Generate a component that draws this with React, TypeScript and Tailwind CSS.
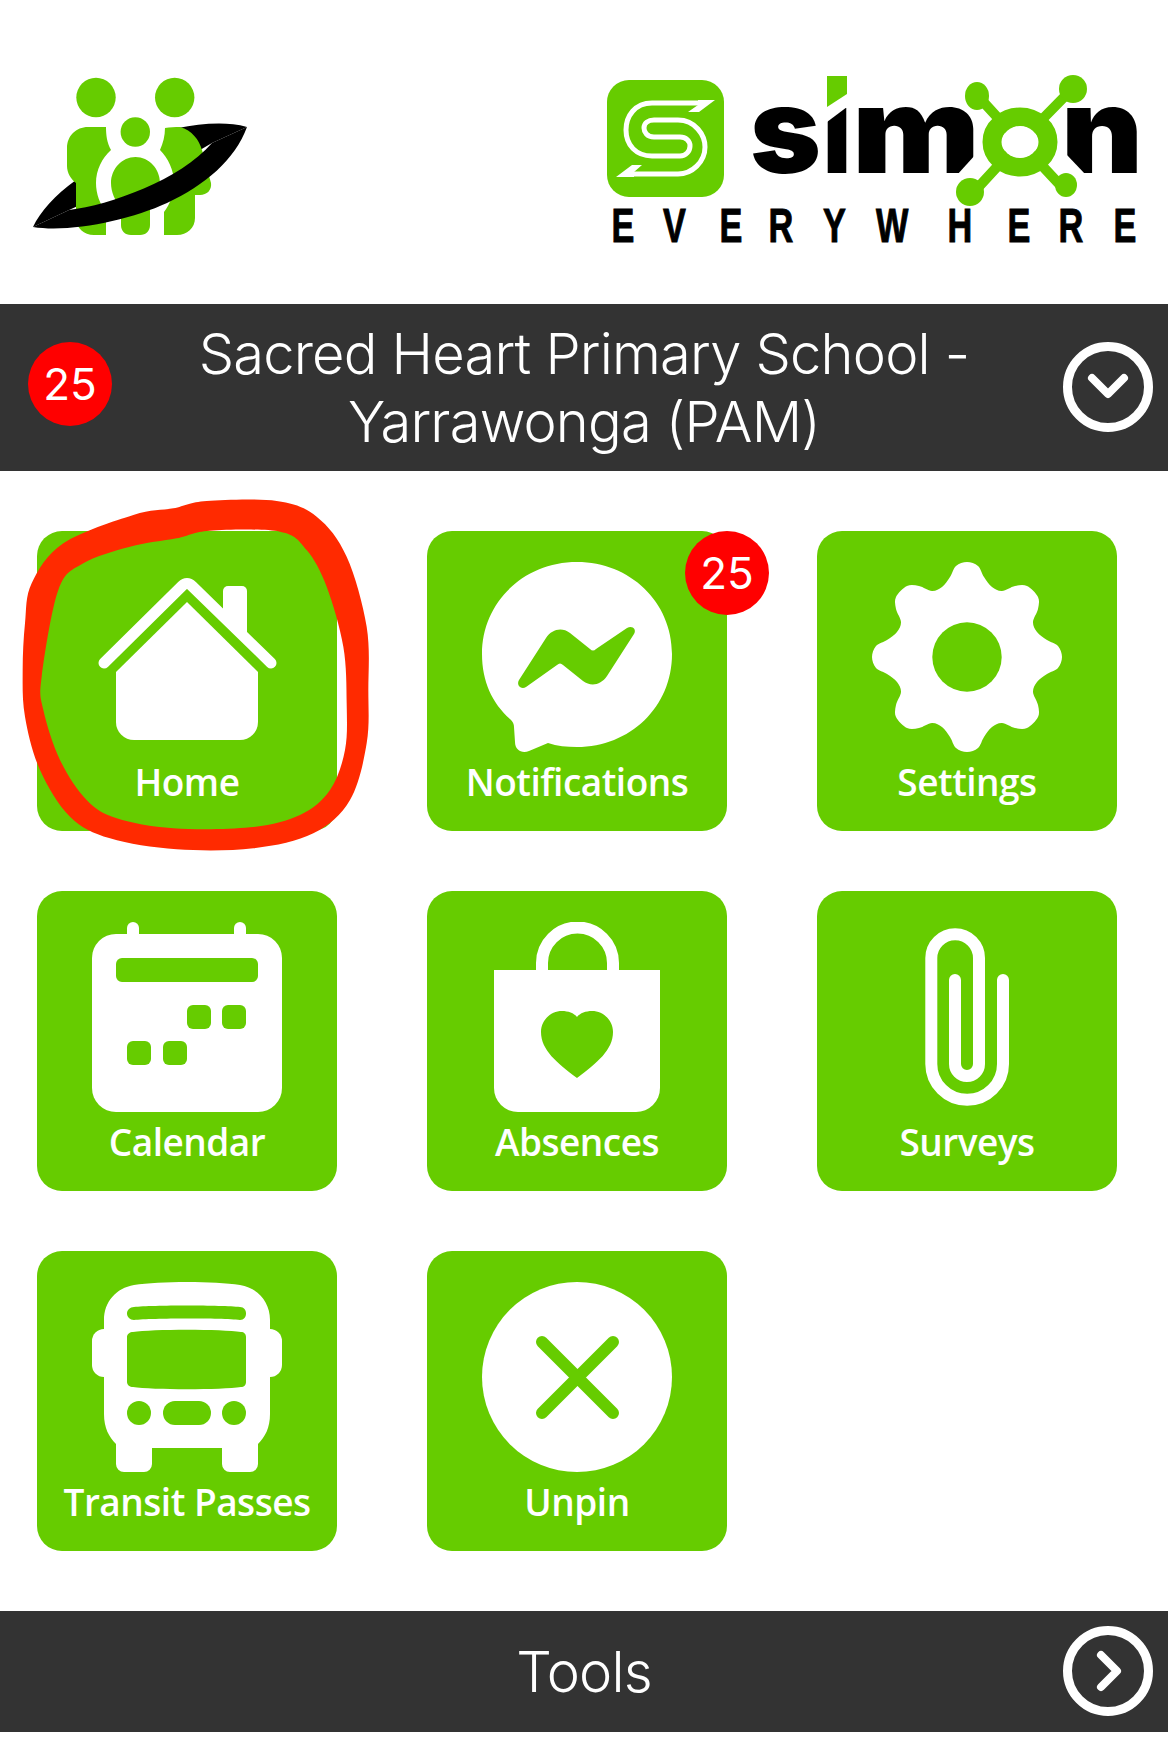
const LABEL_FONT = "font-['Open_Sans','Noto_Sans',sans-serif]";

// smooth closed curve through a list of points
const smooth = (pts: number[][]) => {
  let d = `M${pts[0][0]} ${pts[0][1]}`;
  for (let i = 0; i < pts.length; i++) {
    const p0 = pts[(i - 1 + pts.length) % pts.length];
    const p1 = pts[i];
    const p2 = pts[(i + 1) % pts.length];
    const p3 = pts[(i + 2) % pts.length];
    const c1 = [p1[0] + (p2[0] - p0[0]) / 6, p1[1] + (p2[1] - p0[1]) / 6];
    const c2 = [p2[0] - (p3[0] - p1[0]) / 6, p2[1] - (p3[1] - p1[1]) / 6];
    d += `C${c1[0]} ${c1[1]} ${c2[0]} ${c2[1]} ${p2[0]} ${p2[1]}`;
  }
  return d + "Z";
};

// outline of one quarter of the gear, turned four times round its centre
const GEAR_QUARTER = [[0, -95], [11, -91], [17, -80], [25, -70], [35, -66], [48, -71], [60, -71], [71, -60], [71, -48], [66, -35], [70, -25], [80, -17], [91, -11]];
const gearPath = () => {
  const pts: number[][] = [];
  let q = GEAR_QUARTER;
  for (let i = 0; i < 4; i++) {
    pts.push(...q.map(([x, y]) => [95 + x, 95 + y]));
    q = q.map(([x, y]) => [-y, x]);
  }
  return smooth(pts);
};

const GREEN = "#66cc00";

const FamilyLogo = () => (
  <svg width="300" height="220" viewBox="0 0 300 220" className="mt-10 shrink-0">
    {/* back of the ring, only shows either side of the people */}
    <path d="M247 87C225 81 200 84 178 88L200 110L212 103Z" fill="#000" />
    <path d="M33 187C40 172 55 155 76 140L80 165L69 170Z" fill="#000" />
    <g fill={GREEN}>
      <circle cx="96" cy="57.5" r="19.7" />
      <circle cx="174.7" cy="57.5" r="19.7" />
      <circle cx="135.3" cy="92" r="14.7" />
      <path d="M106 87H88C76 87 67 96 67 108V126C67 133 71 139 76 143V178C76 188 84 195 94 195H106V172C100 164 96 154 96 143C96 130 102 118 111 110C107 103 106 95 106 87Z" />
      <path d="M135.5 117C149 117 160 129 160 143C160 150 158 156 155 160L150 167V185C150 191 146 195 140 195H131C125 195 121 191 121 185V167C115 161 111 152 111 143C111 129 122 117 135.5 117Z" />
      <path d="M165 88C170 87 175 87 180 87C192 90 199 100 202 110L211 143C212 150 207 155 200 155H195V178C195 188 187 195 177 195H164V172C170 164 174 154 174 143C174 130 168 118 160 110C163 103 165 96 165 88Z" />
    </g>
    <path d="M212 103C180 140 110 165 69 170L33 187C70 193 130 180 167 163C205 145 235 120 247 87Z" fill="#000" />
  </svg>
);

const SimonLogo = () => (
  <svg width="588" height="220" viewBox="0 0 588 220" className="mt-[50px] shrink-0">
    <rect x="27" y="30" width="117" height="117" rx="22" fill={GREEN} />
    <path d="M122 53H72C55 53 46 66 46 80C46 95 56 106 72 106H100C106 106 110 101 110 96C110 91 106 87 100 87H74C67 87 64 82 64 78C64 73 68 70 74 70H98C115 70 125 85 125 97C125 112 112 124 98 124H50" fill="none" stroke="#fff" strokeWidth="5" />
    <polygon points="135,50 119,62 108,62 118,55 118,50" fill="#fff" />
    <polygon points="36,127 52,115 62,115 54,122 54,127" fill="#fff" />

    <g fill="#000" fontFamily="Inter, 'Liberation Sans', sans-serif" fontWeight="900" fontSize="119">
      <text x="170" y="123" textLength="71" lengthAdjust="spacingAndGlyphs">s</text>
      <text x="243" y="123" textLength="28" lengthAdjust="spacingAndGlyphs">ı</text>
      <text x="272" y="123" textLength="128" lengthAdjust="spacingAndGlyphs">m</text>
      <text x="481" y="123" textLength="82" lengthAdjust="spacingAndGlyphs">n</text>
    </g>
    <polygon points="244,50 270,50 267,57 247,72 244,72" fill="#fff" />
    <polygon points="247,26 267,26 267,44 247,57" fill={GREEN} />
    <polygon points="396,104 400,104 400,125 377,125" fill="#fff" />
    <polygon points="486,104 482,104 482,125 506,125" fill="#fff" />

    <g fill={GREEN} stroke={GREEN}>
      <path d="M440 92L397 45M440 92L493 38M440 92L393 143M440 92L481 136" strokeWidth="10" fill="none" />
      <ellipse cx="397" cy="46" rx="12" ry="14" strokeWidth="0" />
      <ellipse cx="493" cy="39" rx="14" ry="14" strokeWidth="0" />
      <ellipse cx="390" cy="142" rx="14" ry="14" strokeWidth="0" />
      <ellipse cx="486" cy="135" rx="11" ry="12" strokeWidth="0" />
    </g>
    <ellipse cx="440" cy="92" rx="28" ry="25" fill="none" stroke={GREEN} strokeWidth="19" />
    <ellipse cx="440" cy="92" rx="18" ry="16" fill="#fff" />

    <g transform="scale(0.7 1)" fill="#000" fontFamily="'Liberation Sans', sans-serif" fontWeight="700" fontSize="49">
      <text y="192.5" x={[31.6, 83, 139.6, 188.5, 243, 296, 367.5, 427.6, 478.5, 533.6].map((n) => n / 0.7).join(" ")} stroke="#000" strokeWidth="1">EVERYWHERE</text>
    </g>
  </svg>
);

const Icon = ({ children }: { children: React.ReactNode }) => (
  <svg width="190" height="190" viewBox="0 0 190 190" className="shrink-0" fill="#fff">
    {children}
  </svg>
);

const HomeIcon = () => (
  <Icon>
    <path d="M131 58V29a5 5 0 0 1 5-5h14a5 5 0 0 1 5 5V80Z" />
    <path d="M12 101L90 24Q95 19 100 24L179 101" fill="none" stroke="#fff" strokeWidth="11" strokeLinecap="round" strokeLinejoin="round" />
    <path d="M95 40L166 110V160a18 18 0 0 1-18 18H42a18 18 0 0 1-18-18V110Z" />
  </Icon>
);

const MessengerIcon = () => (
  <Icon>
    <path d="M95 0C148 0 190 40 190 92C190 145 148 185 95 185C85 185 75 184 66 181L47 189C40 192 33 188 33 180L32 165C32 162 31 160 28 157C10 141 0 119 0 92C0 40 42 0 95 0Z" />
    <path d="M37 118L64 76C70 67 80 65 88 71L108 87C110 89 112 89 114 87L145 66C150 63 155 67 152 72L125 114C119 123 109 125 101 119L81 103C79 101 77 101 75 103L44 125C39 128 34 123 37 118Z" fill={GREEN} />
  </Icon>
);

const GearIcon = () => (
  <Icon>
    <path d={gearPath()} />
    <circle cx="95" cy="95" r="34.7" fill={GREEN} />
  </Icon>
);

const CalendarIcon = () => (
  <Icon>
    <rect x="35" y="0" width="12" height="30" rx="6" />
    <rect x="142" y="0" width="12" height="30" rx="6" />
    <rect x="0" y="12" width="190" height="178" rx="24" />
    <g fill={GREEN}>
      <rect x="24" y="36" width="142" height="24" rx="6" />
      <rect x="95" y="83" width="24" height="24" rx="6" />
      <rect x="130" y="83" width="24" height="24" rx="6" />
      <rect x="35" y="119" width="24" height="24" rx="6" />
      <rect x="71" y="119" width="24" height="24" rx="6" />
    </g>
  </Icon>
);

const BagIcon = () => (
  <Icon>
    <path d="M60 52V41A35.5 35.5 0 0 1 131 41V52" fill="none" stroke="#fff" strokeWidth="12" />
    <path d="M12 48H178V166a24 24 0 0 1-24 24H36a24 24 0 0 1-24-24Z" />
    <path d="M95 156C75 141 59 128 59 110C59 98 69 89 80 89C86 89 92 91 95 95C98 91 104 89 110 89C121 89 131 98 131 110C131 128 115 141 95 156Z" fill={GREEN} />
  </Icon>
);

const ClipIcon = () => (
  <Icon>
    <path d="M131 58V142A35.7 35.7 0 0 1 59.3 142V36A23.85 23.85 0 0 1 107 36V142A12 12 0 0 1 83 142V58" fill="none" stroke="#fff" strokeWidth="12" strokeLinecap="round" />
  </Icon>
);

const BusIcon = () => (
  <Icon>
    <rect x="0" y="47" width="40" height="48" rx="12" />
    <rect x="150" y="47" width="40" height="48" rx="12" />
    <path d="M95 0C115 0 135 1 148 3C166 6 178 20 178 38V132C178 146 173 155 166 162V182a8 8 0 0 1-8 8H138a8 8 0 0 1-8-8V166H60V182a8 8 0 0 1-8 8H32a8 8 0 0 1-8-8V162C17 155 12 146 12 132V38C12 20 24 6 42 3C55 1 75 0 95 0Z" />
    <g fill={GREEN}>
      <path d="M42 25C60 23 130 23 148 25C152 25 154 28 154 31.5C154 35 152 38 148 38C130 36 60 36 42 38C38 38 35 35 35 31.5C35 28 38 25 42 25Z" />
      <path d="M41 50C60 47 130 47 149 50C152 50 154 52 154 55V100C154 103 152 105 149 105C130 108 60 108 41 105C38 105 35 103 35 100V55C35 52 38 50 41 50Z" />
      <circle cx="47" cy="131" r="12" />
      <circle cx="142" cy="131" r="12" />
      <rect x="71" y="119" width="48" height="24" rx="12" />
    </g>
  </Icon>
);

const UnpinIcon = () => (
  <Icon>
    <circle cx="95" cy="95" r="95" />
    <path d="M60 60L131 131M131 60L60 131" fill="none" stroke={GREEN} strokeWidth="12" strokeLinecap="round" />
  </Icon>
);

const Badge = ({ className = "" }: { className?: string }) => (
  <div className={`flex h-[84px] w-[84px] items-center justify-center rounded-full bg-[#ff0000] font-['Inter',sans-serif] text-[44px] leading-none text-white ${className}`}>
    25
  </div>
);

const RoundArrow = ({ dir }: { dir: "down" | "right" }) => (
  <svg width="90" height="90" viewBox="0 0 90 90" className="-mt-px shrink-0">
    <circle cx="45" cy="45" r="40.5" fill="none" stroke="#fff" strokeWidth="9" />
    {dir === "down" ? (
      <path d="M29 36L45 52L61 36" fill="none" stroke="#fff" strokeWidth="8" strokeLinecap="round" strokeLinejoin="round" />
    ) : (
      <path d="M38 29L54 45L38 61" fill="none" stroke="#fff" strokeWidth="8" strokeLinecap="round" strokeLinejoin="round" />
    )}
  </svg>
);

const Tile = ({ label, icon, badge }: { label: string; icon: React.ReactNode; badge?: boolean }) => (
  <div className="relative flex h-[300px] w-[300px] flex-col items-center rounded-[25px] bg-[#66cc00] pt-[31px]">
    {icon}
    <div className={`${LABEL_FONT} mt-[8px] text-[37px] leading-[44px] font-semibold tracking-[-0.5px] whitespace-nowrap text-white`}>{label}</div>
    {badge && <Badge className="absolute -top-0 -right-[42px]" />}
  </div>
);

const OUTER = [[620, 33], [830, 33], [950, 80], [1040, 200], [1100, 410], [1105, 600], [1100, 760], [1050, 930], [940, 1030], [760, 1075], [530, 1078], [330, 1045], [210, 980], [120, 840], [75, 680], [68, 540], [75, 400], [95, 280], [190, 160], [400, 75], [520, 55]];
const INNER = [[630, 122], [840, 125], [920, 180], [980, 290], [1030, 470], [1040, 640], [1035, 780], [990, 900], [900, 975], [750, 1012], [520, 1015], [350, 985], [260, 930], [180, 810], [130, 660], [125, 560], [175, 300], [250, 220], [390, 170], [530, 145]];

const Scribble = () => (
  <svg width="400" height="370" viewBox="0 0 1200 1110" className="pointer-events-none absolute top-[490px] left-0">
    <path d={smooth(OUTER) + smooth(INNER)} fill="#ff2a00" fillRule="evenodd" />
  </svg>
);

export default function App() {
  return (
    <div className="relative h-[1738px] w-[1168px] overflow-hidden bg-white">
      <header className="flex h-[304px] items-start justify-between">
        <FamilyLogo />
        <SimonLogo />
      </header>

      <div className="grid h-[167px] grid-cols-[112px_1fr_112px] items-center bg-[#333333] font-['Inter',sans-serif] text-white">
        <Badge className="mb-[7px] ml-[28px]" />
        <div className="text-center text-[56px] leading-[68px] font-[350] tracking-[-0.8px] whitespace-nowrap">
          Sacred Heart Primary School -<br />
          Yarrawonga (PAM)
        </div>
        <div className="flex justify-end pr-[15px]">
          <RoundArrow dir="down" />
        </div>
      </div>

      <div className="grid grid-cols-[repeat(3,300px)] gap-x-[90px] gap-y-[60px] px-[37px] py-[60px]">
        <Tile label="Home" icon={<HomeIcon />} />
        <Tile label="Notifications" icon={<MessengerIcon />} badge />
        <Tile label="Settings" icon={<GearIcon />} />
        <Tile label="Calendar" icon={<CalendarIcon />} />
        <Tile label="Absences" icon={<BagIcon />} />
        <Tile label="Surveys" icon={<ClipIcon />} />
        <Tile label="Transit Passes" icon={<BusIcon />} />
        <Tile label="Unpin" icon={<UnpinIcon />} />
      </div>

      <div className="grid h-[121px] grid-cols-[112px_1fr_112px] items-center bg-[#333333] font-['Inter',sans-serif] text-white">
        <div />
        <div className="text-center text-[56px] leading-[68px] font-[350] tracking-[-0.8px]">Tools</div>
        <div className="flex justify-end pr-[15px]">
          <RoundArrow dir="right" />
        </div>
      </div>

      <Scribble />
    </div>
  );
}
